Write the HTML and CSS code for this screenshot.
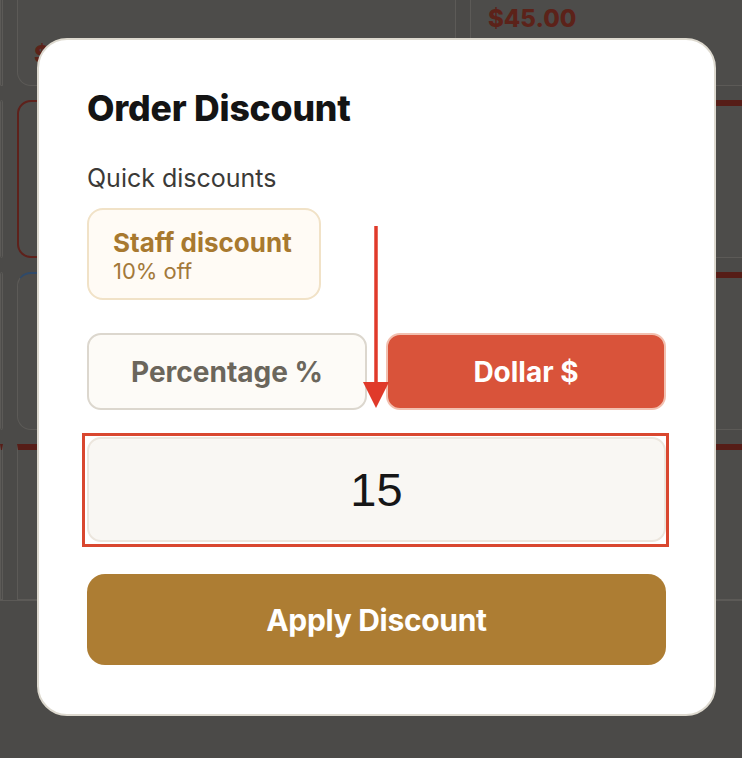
FILE: index.html
```html
<!DOCTYPE html>
<html lang="en">
<head>
<meta charset="utf-8">
<title>Order Discount</title>
<link rel="stylesheet" href="styles.css">
</head>
<body>
<div class="page">
  <div class="grid">
    <div class="card"></div>
    <div class="card"><span class="price price-left">$</span></div>
    <div class="card"><span class="price">$45.00</span></div>

    <div class="card"></div>
    <div class="card card-selected"></div>
    <div class="card card-red-top"></div>

    <div class="card"></div>
    <div class="card card-blue"></div>
    <div class="card card-red-top"></div>

    <div class="card card-red-top"></div>
    <div class="card card-red-top"></div>
    <div class="card card-red-top"></div>
  </div>
  <div class="footer"></div>
</div>

<div class="overlay">
  <div class="modal">
    <h2 class="title">Order Discount</h2>
    <div class="label">Quick discounts</div>
    <div class="quick-row">
      <button class="quick-card">
        <span class="quick-name">Staff discount</span>
        <span class="quick-sub">10% off</span>
      </button>
    </div>
    <div class="toggle">
      <button class="toggle-btn">Percentage %</button>
      <button class="toggle-btn active">Dollar $</button>
    </div>
    <div class="input-wrap">
      <div class="amount">15</div>
      <div class="highlight"></div>
    </div>
    <button class="apply">Apply Discount</button>
    <svg class="arrow" width="30" height="186" viewBox="0 0 30 186">
      <line x1="14" y1="1" x2="14" y2="162" stroke="#e03a2a" stroke-width="3.5"/>
      <polygon points="1,157 27,157 14,183" fill="#e03a2a"/>
    </svg>
  </div>
</div>
</body>
</html>
```

FILE: styles.css
```css
* { box-sizing: border-box; }
html, body {
  margin: 0;
  padding: 0;
  width: 742px;
  height: 758px;
  overflow: hidden;
  background: #4b4a48;
  font-family: Inter, "Noto Sans", "Liberation Sans", sans-serif;
}

.page {
  height: 758px;
  display: flex;
  flex-direction: column;
  overflow: hidden;
}
.grid {
  width: 770px;
  display: grid;
  grid-template-columns: 3px 439px 1fr;
  grid-template-rows: 86px 158px 158px 156px;
  column-gap: 14px;
  row-gap: 14px;
}
.card {
  border: 1.5px solid #5c5a57;
  border-top: none;
  border-radius: 0 0 14px 14px;
  background: #4d4c4a;
  position: relative;
}
.grid .card:nth-child(n+4) {
  border-top: 1.5px solid #5c5a57;
  border-radius: 14px;
}
.grid .card.card-selected {
  border: 2px solid #5e211b;
}
.grid .card.card-red-top {
  border-top: 6px solid #561d17;
  border-radius: 0;
}
.grid .card.card-blue {
  border-top: 2px solid #2f4a6a;
}
.price {
  display: block;
  padding: 4px 0 0 17px;
  color: #5c2219;
  font-weight: 800;
  font-size: 24px;
}
.price-left {
  padding: 40px 0 0 16px;
}
.footer {
  flex: 1;
  border-top: 1.5px solid #5c5a57;
}

.overlay {
  position: fixed;
  inset: 0;
  padding: 38px 0 0 37px;
}
.modal {
  position: relative;
  width: 679px;
  height: 678px;
  background: #ffffff;
  border: 2px solid #ddd9cf;
  border-radius: 30px;
  padding: 47px 48px 48px 48px;
  display: flex;
  flex-direction: column;
}
.title {
  margin: 0;
  font-size: 35.6px;
  line-height: 44px;
  font-weight: 800;
  color: #141414;
  letter-spacing: -0.2px;
}
.label {
  margin-top: 33px;
  font-size: 25px;
  line-height: 29px;
  color: #3b3a37;
}
.quick-row {
  margin-top: 15px;
  display: flex;
}
.quick-card {
  display: flex;
  flex-direction: column;
  align-items: flex-start;
  width: 234px;
  height: 92px;
  padding: 17px 16px 0 24px;
  background: #fffbf5;
  border: 2px solid #f1e2c7;
  border-radius: 16px;
  font-family: inherit;
  text-align: left;
}
.quick-name {
  font-size: 26px;
  line-height: 31px;
  font-weight: 700;
  color: #a8792f;
  white-space: nowrap;
}
.quick-sub {
  font-size: 22px;
  line-height: 27px;
  color: #a3793a;
}
.toggle {
  margin-top: 33px;
  display: grid;
  grid-template-columns: 1fr 1fr;
  column-gap: 19px;
}
.toggle-btn {
  height: 77px;
  padding-top: 2px;
  border-radius: 14px;
  border: 2px solid #dcd7ce;
  background: #fdfbf7;
  color: #6b665c;
  font-family: inherit;
  font-size: 28px;
  font-weight: 700;
}
.toggle-btn.active {
  background: #d9533a;
  border-color: #f2c0b0;
  color: #ffffff;
}
.input-wrap {
  position: relative;
  margin-top: 27px;
}
.amount {
  height: 105px;
  border: 2px solid #ece6dd;
  border-radius: 14px;
  background: #f9f7f3;
  display: flex;
  align-items: center;
  justify-content: center;
  font-family: "Liberation Sans", Arial, sans-serif;
  font-size: 47px;
  color: #161616;
}
.highlight {
  position: absolute;
  left: -5px;
  right: -3px;
  top: -4px;
  bottom: -5px;
  border: 3px solid #d9472f;
}
.apply {
  margin-top: 32px;
  height: 91px;
  border: none;
  border-radius: 18px;
  background: #ad7d33;
  color: #ffffff;
  font-family: inherit;
  font-size: 30px;
  font-weight: 700;
  letter-spacing: -0.3px;
}
.arrow {
  position: absolute;
  left: 323px;
  top: 185px;
}
```
